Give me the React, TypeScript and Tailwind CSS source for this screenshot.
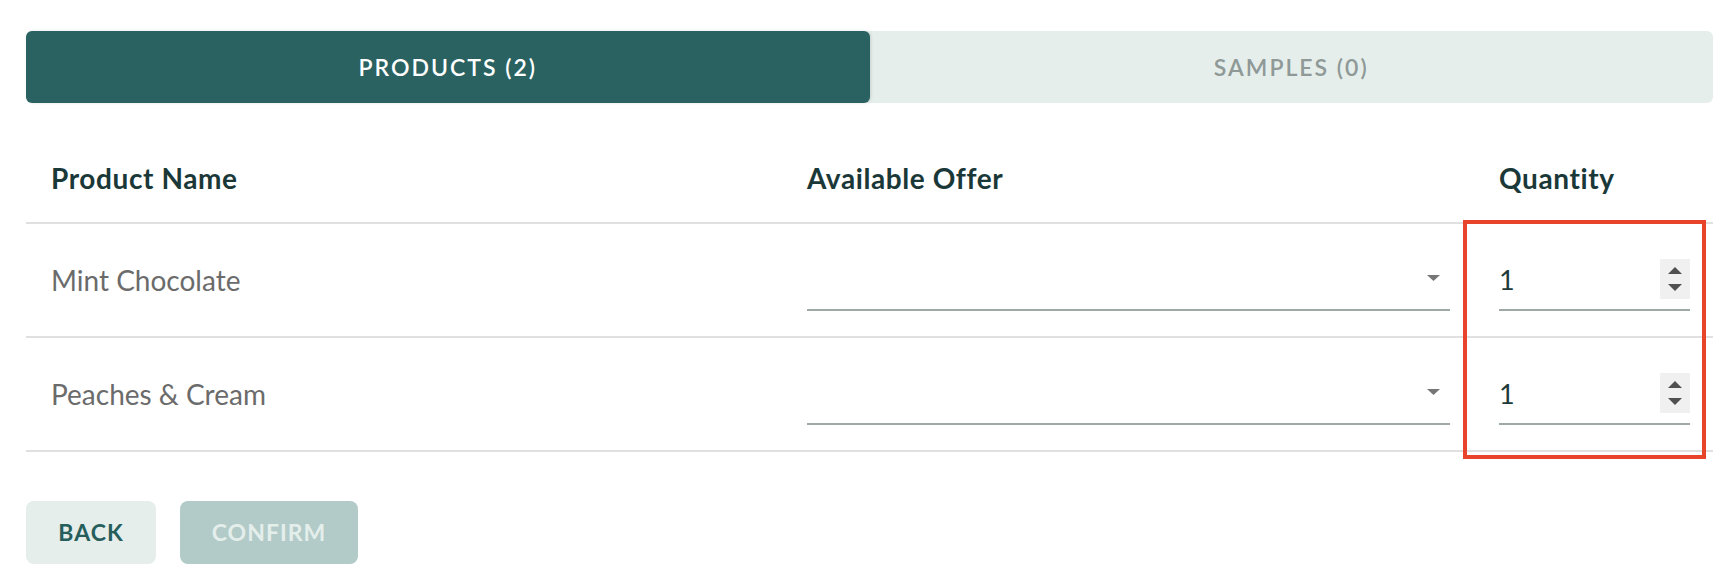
import { useState } from "react";

type Row = { id: number; name: string; qty: number };

const rows: Row[] = [
  { id: 1, name: "Mint Chocolate", qty: 1 },
  { id: 2, name: "Peaches & Cream", qty: 1 },
];

const Triangle = ({ up, className }: { up?: boolean; className?: string }) => (
  <svg width="14" height="7" viewBox="0 0 14 7" className={className}>
    <path d={up ? "M0 7 L7 0 L14 7 Z" : "M0 0 L14 0 L7 7 Z"} fill="currentColor" />
  </svg>
);

const OfferSelect = () => (
  <div className="mt-[10px] flex h-[52px] w-full items-center justify-end border-b-2 border-[#9ea8a7] pb-[12px] pr-[10px]">
    <svg width="13" height="6" viewBox="0 0 13 6" className="text-[#767676]">
      <path d="M0 0 L13 0 L6.5 6 Z" fill="currentColor" />
    </svg>
  </div>
);

const QuantityInput = ({ value }: { value: number }) => (
  <div className="mt-[10px] flex h-[52px] w-full items-start border-b-2 border-[#9ea8a7]">
    <div className="flex h-[40px] w-full items-center justify-between">
      <span className="text-[27px] leading-none text-[#1d3a3a]">{value}</span>
      <div className="flex h-[40px] w-[30px] flex-col items-center justify-center gap-[10px] bg-[#f0f0f0] text-[#505050]">
        <Triangle up />
        <Triangle />
      </div>
    </div>
  </div>
);

export default function App() {
  const [tab, setTab] = useState<"products" | "samples">("products");

  return (
    <div className="min-h-[586px] bg-white pl-[26px] pr-[19px] pt-[31px] font-['Lato','Liberation_Sans',sans-serif]">
      <div className="flex h-[72px] rounded-md bg-[#e5eeeb]">
        <button
          onClick={() => setTab("products")}
          className={
            tab === "products"
              ? "flex-1 rounded-md bg-[#2a6262] text-[23px] font-semibold tracking-[2px] text-white shadow-[1px_0_3px_rgba(0,0,0,0.12)]"
              : "flex-1 rounded-md text-[23px] font-semibold tracking-[2px] text-[#8f9997]"
          }
        >
          PRODUCTS (2)
        </button>
        <button
          onClick={() => setTab("samples")}
          className={
            tab === "samples"
              ? "flex-1 rounded-md bg-[#2a6262] text-[23px] font-semibold tracking-[2px] text-white"
              : "flex-1 rounded-md text-[23px] font-semibold tracking-[2px] text-[#8f9997]"
          }
        >
          SAMPLES (0)
        </button>
      </div>

      <div className="relative mt-[31px]">
        <div className="grid h-[90px] grid-cols-[756px_692px_239px] items-center border-b-2 border-[#e0e0e0] text-[28px] font-bold tracking-[0.6px] text-[#1b3838]">
          <div className="pl-[25px]">Product Name</div>
          <div className="pl-[25px]">Available Offer</div>
          <div className="pl-[25px]">Quantity</div>
        </div>

        {rows.map((row) => (
          <div
            key={row.id}
            className="grid h-[114px] grid-cols-[756px_692px_239px] items-center border-b-2 border-[#e0e0e0]"
          >
            <div className="pl-[25px] text-[28px] text-[#6b6b6b]">{row.name}</div>
            <div className="flex items-center pl-[25px] pr-[24px]">
              <OfferSelect />
            </div>
            <div className="flex items-center pl-[25px] pr-[23px]">
              <QuantityInput value={row.qty} />
            </div>
          </div>
        ))}

        {/* highlight around the quantity column */}
        <div className="pointer-events-none absolute left-[1437px] top-[86px] h-[239px] w-[243px] border-4 border-[#e8432b]" />
      </div>

      <div className="mt-[49px] flex gap-6">
        <button className="h-[63px] w-[130px] rounded-lg bg-[#e5eeeb] text-[23px] font-bold tracking-[1px] text-[#265e5c]">
          BACK
        </button>
        <button
          disabled
          className="h-[63px] w-[178px] rounded-lg bg-[#b2cbc8] text-[23px] font-bold tracking-[1px] text-[#e4eeeb]"
        >
          CONFIRM
        </button>
      </div>
    </div>
  );
}
